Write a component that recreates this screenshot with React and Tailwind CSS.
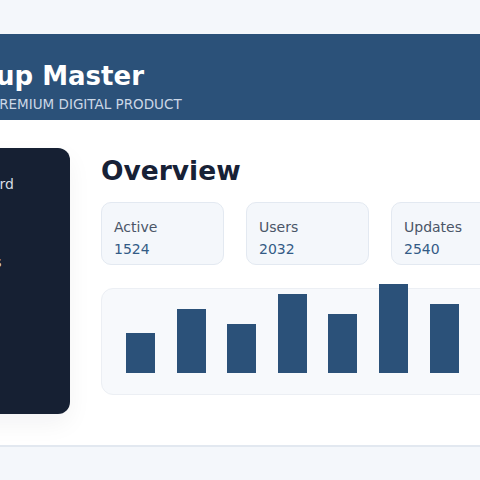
import React from 'react';

const stats = [
  { label: 'Active', value: 1524 },
  { label: 'Users', value: 2032 },
  { label: 'Updates', value: 2540 },
];

const bars = [40, 65, 50, 80, 60, 90, 70];

const navItems = ['Dashboard', 'Reports', 'Analytics'];

export default function App() {
  return (
    <div className="min-h-screen bg-[#f4f7fb] overflow-hidden pt-[34px] font-['DejaVu_Sans',sans-serif]">
      <div className="w-[656px] ml-[-114px]">
        {/* Header */}
        <header className="bg-[#2b5179] h-[86px] pl-[105px] pt-6">
          <h1 className="pl-[5px] text-[26px] leading-[36px] font-bold text-white">
            up Master
          </h1>
          <p className="text-[13.5px] leading-5 text-[#cbd7e6]">PREMIUM DIGITAL PRODUCT</p>
        </header>

        {/* Body */}
        <div className="bg-white flex gap-[31px] px-7 pt-7 pb-[31px]">
          <aside className="w-[156px] shrink-0 rounded-xl bg-[#162033] shadow-[0_10px_24px_rgba(15,23,42,0.05)] px-6 pt-[26px]">
            <nav className="flex flex-col gap-[19px]">
              {navItems.map((item) => (
                <span key={item} className="text-sm leading-5 text-[#d5dbe4]">
                  {item}
                </span>
              ))}
            </nav>
          </aside>

          <main className="flex-1 pt-2 pb-[19px]">
            <h2 className="text-[26.5px] leading-[30px] font-bold text-[#172136]">Overview</h2>

            <div className="grid grid-cols-3 gap-[22px] mt-4">
              {stats.map((s) => (
                <div
                  key={s.label}
                  className="h-[63px] rounded-[10px] border border-[#e3e9f1] bg-[#f4f7fb] px-3 pt-[13px]"
                >
                  <div className="text-sm leading-[22px] text-[#4a5567]">{s.label}</div>
                  <div className="text-sm leading-[22px] text-[#335b86]">{s.value}</div>
                </div>
              ))}
            </div>

            <div className="mt-[23px] h-[107px] rounded-xl border border-[#eceff4] bg-[#f7f9fc] px-6 pb-[21px] flex items-end gap-[21.6px]">
              {bars.map((v, i) => (
                <div
                  key={i}
                  className="w-[29px] shrink-0 bg-[#2b5179]"
                  style={{ height: `${v * 0.99}px` }}
                />
              ))}
            </div>
          </main>
        </div>

        <div className="border-t-2 border-[#e2e8f0] h-[40px]" />
      </div>
    </div>
  );
}
